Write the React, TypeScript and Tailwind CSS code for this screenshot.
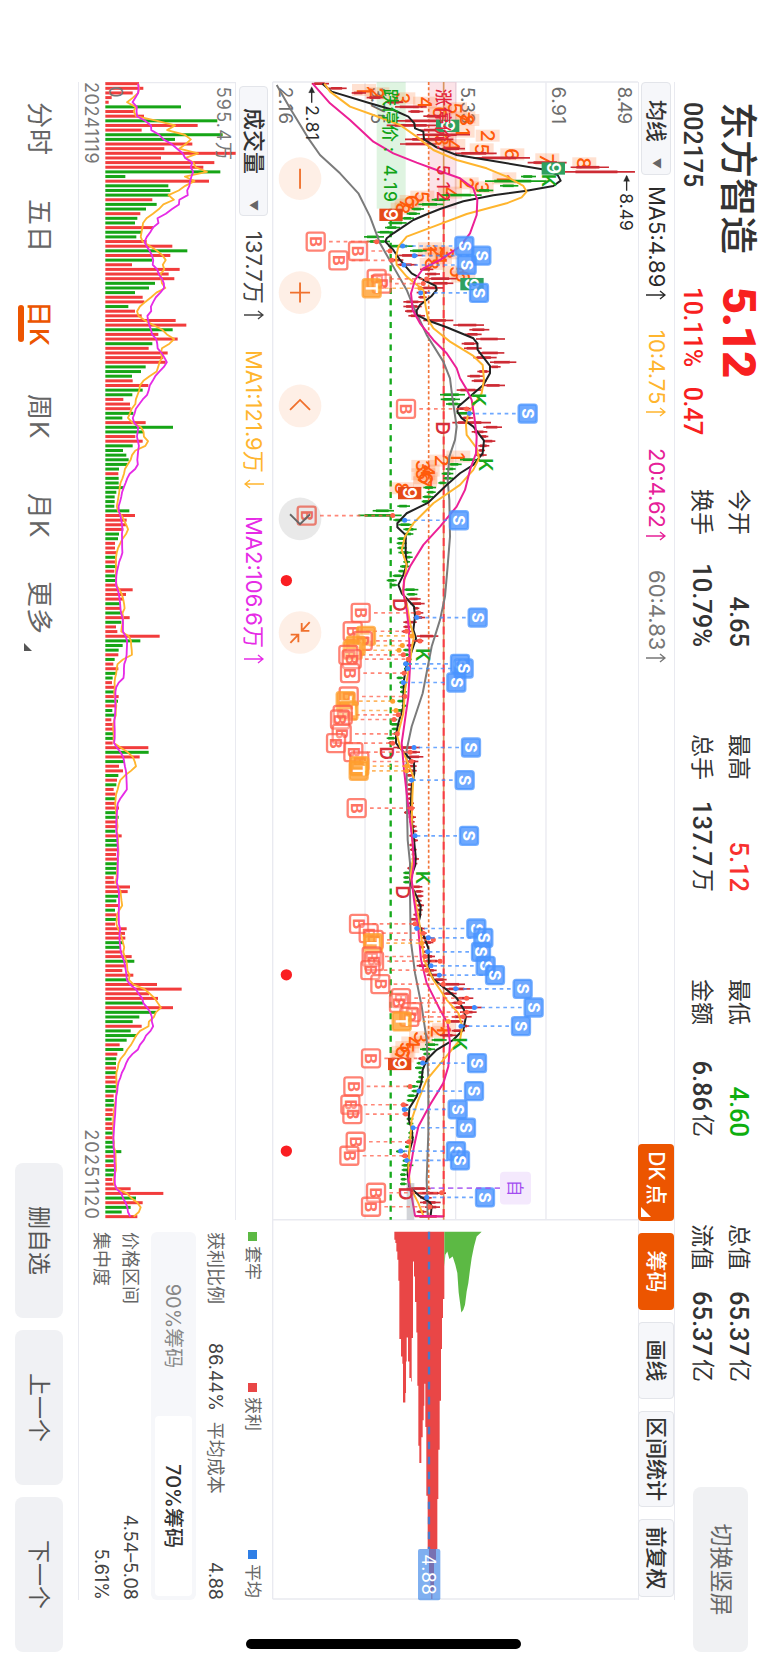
import type { ReactNode } from "react";

const UP = "#f23c3c";
const DOWN = "#16a516";

// Chart units: three per pixel. x runs along time, value grows upwards.
const TOP = 1134;
const STEP = 13.93;
const barX = (i: number) => 71 + i * STEP;
const yOf = (v: number) => TOP - v;

const stats = [
  [
    { label: "今开", value: "4.65", color: "text-[#333]" },
    { label: "换手", value: "10.79%", color: "text-[#333]" },
  ],
  [
    { label: "最高", value: "5.12", color: "text-[#f8302f]" },
    { label: "总手", value: "137.7", unit: "万", color: "text-[#333]" },
  ],
  [
    { label: "最低", value: "4.60", color: "text-[#0fae0f]" },
    { label: "金额", value: "6.86", unit: "亿", color: "text-[#333]" },
  ],
  [
    { label: "总值", value: "65.37", unit: "亿", color: "text-[#333]" },
    { label: "流值", value: "65.37", unit: "亿", color: "text-[#333]" },
  ],
];

const periods = [
  { label: "分时", width: "w-[97px]" },
  { label: "五日", width: "w-[102px]" },
  { label: "日K", width: "w-[93px]", active: true },
  { label: "周K", width: "w-[99px]" },
  { label: "月K", width: "w-[88px]" },
];

// Volume per day, negative on falling days
const volumes = [
  101, 114, 82, 19, 10, -227, 89, 116, -336, 277, 109, -352, -209, 261, 177, 391,
  167, 327, 294, -345, -60, 311, -189, -195, -192, 141, -154, -122, 105, -96, -89,
  144, -109, -93, 124, 201, -246, 195, -140, 80, 223, 190, 207, -149, -131, -89,
  112, 117, -69, 89, 109, 211, 243, -202, 159, 217, -141, 130, 187, 174, 181, -121,
  -107, -80, 82, 129, -112, -81, 54, 74, 76, -84, -51, 121, -203, -114, 90, 112,
  -82, -53, -63, -70, -67, -41, 39, -40, -40, -56, -33, -28, -28, -27, -72, 89, 64,
  62, 54, -41, -38, 29, 29, 34, -30, 34, -34, 27, -34, -34, 36, 82, 62, 54, -47, 44,
  -50, 73, -48, 32, 36, 163, -105, -52, -40, 39, -28, 24, 39, -33, -22, 20, 29, -28,
  40, -38, 29, -21, -29, 18, 22, 27, -29, -27, 22, 129, -130, 103, -57, 41, 53, -39,
  35, -33, 25, 30, -31, 29, 41, -32, -40, 34, 36, -30, 49, -39, -39, 39, 32, 39,
  -35, -34, -34, 25, 28, 74, 67, -41, -33, 38, -29, 34, -36, 29, 64, 59, 60, -53,
  -47, 51, 79, -87, 63, 51, 84, -69, 155, 229, 131, 158, -114, 203, -152, -102, -82,
  109, -76, -93, -64, 43, -54, 36, -33, -32, 32, -33, 34, 36, -35, -32, 25, -25,
  -27, 22, 26, -19, 24, 25, -26, 24, -27, -26, -48, 29, -25, 31, -26, -26, 21, 27,
  76, 174, -92, 112, -76, -49, 96,
];

// [low, high, 1 = rising / 0 = falling]
const candles: number[][] = [
  [155, 207, 1], [205, 260, 1], [275, 318, 1], [320, 375, 1], [375, 430, 1],
  [405, 500, 1], [445, 490, 1], [490, 560, 1], [410, 580, 1], [380, 540, 1],
  [480, 560, 1], [470, 630, 1], [435, 580, 1], [420, 530, 1], [545, 615, 1],
  [585, 710, 1], [640, 810, 1], [803, 920, 1], [932, 1047, 1], [915, 1125, 1],
  [783, 828, 0], [675, 860, 0], [720, 775, 0], [650, 700, 0], [540, 665, 0],
  [515, 570, 0], [475, 550, 0], [455, 492, 0], [440, 480, 0], [425, 462, 0],
  [385, 440, 0], [375, 420, 0], [352, 400, 0], [312, 372, 0], [320, 390, 0],
  [385, 460, 0], [450, 500, 0], [415, 490, 1], [388, 430, 1], [410, 470, 1],
  [480, 520, 1], [495, 540, 1], [500, 590, 1], [510, 580, 1], [480, 550, 1],
  [470, 510, 1], [475, 500, 1], [430, 490, 1], [430, 485, 1], [435, 465, 1],
  [445, 495, 1], [490, 580, 1], [580, 672, 1], [628, 688, 1], [615, 665, 1],
  [648, 735, 1], [605, 655, 1], [612, 665, 1], [655, 733, 1], [640, 710, 1],
  [690, 769, 1], [690, 722, 1], [652, 692, 1], [622, 672, 1], [635, 680, 1],
  [670, 735, 1], [590, 665, 1], [540, 615, 0], [542, 600, 0], [558, 605, 0],
  [590, 640, 1], [590, 640, 0], [605, 640, 1], [577, 693, 1], [670, 726, 1],
  [635, 682, 1], [660, 685, 1], [670, 706, 1], [655, 688, 1], [655, 675, 1],
  [645, 680, 1], [600, 660, 0], [565, 605, 0], [557, 587, 0], [545, 580, 0],
  [550, 580, 0], [535, 560, 0], [490, 528, 0], [500, 527, 0], [488, 520, 0],
  [485, 510, 0], [412, 450, 0], [338, 402, 0], [295, 425, 0], [400, 440, 0],
  [415, 460, 0], [430, 470, 0], [432, 460, 0], [412, 440, 0], [410, 440, 0],
  [412, 440, 0], [415, 455, 0], [430, 458, 0], [430, 450, 0], [420, 450, 0],
  [415, 435, 0], [398, 430, 0], [380, 410, 0], [390, 412, 0], [430, 475, 0],
  [440, 472, 0], [445, 482, 1], [450, 494, 1], [460, 478, 1], [460, 490, 1],
  [460, 495, 1], [430, 470, 1], [430, 455, 1], [425, 455, 1], [470, 535, 1],
  [465, 490, 1], [440, 460, 1], [430, 455, 0], [425, 450, 0], [440, 455, 0],
  [430, 455, 0], [432, 450, 0], [425, 440, 1], [410, 430, 0], [418, 438, 0],
  [420, 435, 0], [420, 440, 0], [425, 440, 1], [412, 432, 0], [425, 440, 0],
  [410, 430, 0], [408, 425, 1], [395, 412, 0], [390, 420, 0], [395, 415, 0],
  [400, 415, 0], [380, 410, 0], [385, 405, 1], [400, 480, 1], [440, 480, 1],
  [440, 490, 1], [440, 475, 1], [430, 470, 1], [432, 470, 1], [440, 460, 1],
  [445, 465, 0], [442, 460, 1], [442, 458, 1], [440, 456, 1], [444, 458, 1],
  [446, 462, 1], [444, 464, 1], [432, 452, 1], [446, 468, 1], [448, 464, 1],
  [450, 470, 1], [452, 472, 1], [448, 470, 1], [455, 474, 1], [448, 465, 1],
  [450, 470, 1], [455, 468, 1], [455, 477, 1], [455, 472, 1], [442, 460, 1],
  [430, 455, 0], [430, 450, 0], [430, 455, 0], [455, 487, 1], [465, 490, 1],
  [470, 490, 1], [468, 485, 1], [470, 492, 1], [465, 488, 1], [460, 485, 1],
  [450, 475, 1], [455, 480, 1], [465, 495, 1], [480, 500, 1], [485, 515, 1],
  [490, 520, 1], [480, 495, 1], [490, 510, 1], [490, 525, 1], [490, 545, 1],
  [470, 515, 1], [495, 530, 1], [500, 545, 1], [520, 560, 1], [545, 615, 1],
  [555, 632, 1], [550, 590, 1], [590, 640, 1], [575, 615, 1], [575, 665, 1],
  [600, 650, 1], [575, 635, 1], [565, 610, 1], [600, 628, 1], [575, 615, 1],
  [540, 590, 1], [515, 560, 0], [495, 535, 0], [480, 525, 0], [490, 510, 0],
  [475, 495, 1], [470, 495, 0], [465, 490, 0], [475, 490, 0], [475, 492, 0],
  [468, 490, 0], [440, 475, 0], [455, 480, 0], [442, 468, 0], [440, 465, 0],
  [425, 445, 1], [430, 445, 0], [430, 450, 1], [440, 460, 0], [440, 460, 0],
  [450, 465, 0], [445, 460, 0], [445, 462, 0], [435, 460, 1], [435, 450, 0],
  [408, 435, 0], [425, 445, 1], [428, 445, 0], [425, 460, 0], [425, 450, 0],
  [420, 440, 0], [422, 440, 0], [420, 440, 0], [440, 512, 1], [465, 558, 1],
  [480, 515, 1], [480, 542, 1], [495, 540, 1], [470, 500, 1], [465, 552, 1],
];

// Moving averages as [value, x] pairs
const ma5 =
  "187,71 215,95 330,130 400,150 445,170 463,190 465,205 490,215 492,238 530,262 590,285 700,303 860,330 893,345 902,362 880,378 800,392 700,406 610,424 540,447 495,465 460,480 430,500 400,520 380,535 376,545 400,570 420,600 455,640 500,665 527,678 530,690 515,708 480,735 470,752 470,765 500,780 560,802 640,835 652,850 653,870 690,918 690,940 670,975 630,1010 595,1040 592,1055 605,1075 640,1100 672,1142 668,1180 640,1215 600,1240 560,1275 505,1328 440,1360 412,1390 412,1402 437,1425 437,1480 440,1515 430,1545 415,1575 425,1600 462,1640 465,1670 460,1710 468,1735 455,1775 440,1810 432,1860 430,1910 430,1940 415,1990 408,2025 408,2050 425,2070 462,2110 463,2140 455,2180 452,2240 455,2280 462,2340 467,2390 466,2415 452,2455 455,2480 470,2510 482,2540 480,2570 475,2590 490,2625 505,2665 507,2730 520,2758 560,2790 590,2815 612,2850 617,2875 610,2910 580,2940 530,2970 500,3000 488,3030 484,3070 470,3110 448,3145 446,3180 455,3205 458,3240 447,3280 443,3340 447,3380 480,3410 510,3428 515,3440 512,3468";
const ma10 =
  "193,71 210,95 270,140 340,165 420,195 470,230 520,270 590,300 680,325 740,350 790,378 800,395 785,412 740,430 620,462 520,500 440,530 415,560 408,590 410,615 440,650 490,690 497,740 505,780 520,805 570,845 640,888 668,915 672,960 665,1000 645,1030 625,1060 618,1095 620,1125 650,1165 657,1195 640,1230 600,1275 520,1330 460,1390 435,1430 425,1470 440,1515 435,1550 428,1595 440,1630 450,1690 462,1730 455,1765 450,1810 435,1890 430,1960 412,2030 420,2060 440,2100 460,2150 457,2210 455,2300 460,2390 452,2450 465,2520 475,2570 485,2640 492,2700 520,2760 560,2820 595,2860 607,2900 600,2940 550,3000 500,3060 475,3120 455,3180 450,3250 445,3320 450,3380 475,3430 490,3468";
const ma20 =
  "158,71 210,130 270,180 340,245 400,280 470,308 530,330 600,355 640,385 652,420 650,465 630,520 600,560 540,600 490,625 465,660 453,700 458,750 480,790 520,840 560,880 590,925 600,955 618,985 635,1020 643,1070 650,1130 648,1180 630,1230 615,1290 590,1340 540,1400 490,1455 450,1520 432,1560 430,1600 440,1650 447,1710 448,1760 450,1820 445,1910 435,1980 425,2050 432,2130 440,2200 450,2280 458,2350 462,2410 455,2460 462,2520 475,2610 483,2700 500,2770 540,2850 563,2890 570,2950 565,3020 550,3070 510,3135 475,3200 462,3260 452,3320 445,3360 455,3410 465,3468 550,3470";
const ma60 =
  "50,75 90,145 145,235 180,285 240,340 295,400 330,470 360,550 400,620 440,690 458,735 500,825 550,905 570,955 578,1020 590,1100 585,1140 568,1190 563,1260 568,1320 570,1430 562,1530 555,1610 540,1680 515,1760 488,1900 455,2000 440,2070 440,2200 443,2340 450,2410 450,2500 452,2640 465,2740 485,2840 500,2940 505,3060 505,3220 500,3360 503,3468";

const parse = (pairs: string) => pairs.split(" ").map((p) => p.split(",").map(Number));

const toLine = (pairs: string) =>
  parse(pairs)
    .map(([v, x]) => `${x},${yOf(v)}`)
    .join(" ");

// Same points, joined with right-angled steps
const toSteps = (pairs: string) =>
  parse(pairs)
    .map(([v, x], i, all) => {
      const before = i > 0 ? all[i - 1][1] : x;
      return `${before},${yOf(v)} ${x},${yOf(v)}`;
    })
    .join(" ");

// [kind, label value, x, dot value]
const marks: [string, number, number, number][] = [
  ["B", 167, 545, 350], ["B", 294, 573, 390], ["B", 235, 601, 395],
  ["B", 350, 657, 500], ["B", 365, 671, 490], ["T", 335, 685, 480],
  ["S", 664, 587, 463], ["S", 613, 558, 428], ["S", 620, 615, 432], ["S", 657, 699, 482],
  ["B", 438, 1047, 620], ["S", 803, 1061, 628], ["B", 140, 1367, 398],
  ["S", 597, 1381, 434], ["B", 302, 1659, 475], ["S", 653, 1673, 470],
  ["B", 278, 1714, 440], ["T", 318, 1728, 455], ["B", 308, 1743, 480],
  ["T", 287, 1757, 427], ["T", 278, 1771, 417], ["B", 265, 1785, 430],
  ["B", 275, 1798, 445], ["B", 270, 1840, 432], ["S", 600, 1812, 437],
  ["S", 611, 1826, 443], ["S", 589, 1868, 430], ["B", 266, 1910, 435],
  ["T", 257, 1924, 398], ["T", 265, 1952, 408], ["B", 248, 1965, 415],
  ["B", 240, 1979, 402], ["B", 245, 2022, 412], ["B", 228, 2050, 398],
  ["B", 280, 2077, 450], ["B", 298, 2105, 455], ["T", 298, 2119, 440],
  ["T", 296, 2133, 440], ["B", 290, 2245, 455], ["S", 633, 2063, 462],
  ["S", 614, 2161, 455], ["S", 627, 2328, 465], ["B", 297, 2592, 465],
  ["B", 326, 2620, 490], ["B", 341, 2640, 520], ["T", 339, 2650, 485],
  ["B", 335, 2690, 495], ["B", 342, 2704, 540], ["B", 331, 2731, 500],
  ["B", 361, 2773, 550], ["B", 423, 2815, 620], ["B", 417, 2829, 600],
  ["B", 454, 2857, 620], ["B", 448, 2871, 610], ["T", 425, 2885, 565],
  ["B", 333, 2996, 490], ["B", 280, 3080, 450], ["B", 271, 3135, 430],
  ["B", 277, 3163, 437], ["B", 287, 3246, 447], ["B", 268, 3288, 435],
  ["B", 348, 3399, 545], ["B", 333, 3441, 510], ["S", 649, 2606, 470],
  ["S", 670, 2634, 505], ["S", 663, 2676, 503], ["S", 677, 2718, 513],
  ["S", 705, 2746, 538], ["S", 788, 2787, 587], ["S", 821, 2843, 643],
  ["S", 783, 2899, 603], ["S", 651, 3010, 488], ["S", 642, 3094, 477],
  ["S", 593, 3149, 433], ["S", 618, 3204, 459], ["S", 588, 3274, 422],
  ["S", 600, 3302, 440], ["S", 675, 3413, 500],
];

// Nine-turn counts: [text, value, x]
const turns: [string, number, number][] = [
  ["1", 312, 90], ["2", 352, 100], ["3", 430, 115], ["4", 495, 128], ["5", 585, 145],
  ["6", 540, 158], ["7", 610, 172], ["8", 622, 180], ["1", 608, 215], ["2", 683, 227],
  ["3", 545, 240], ["4", 580, 255], ["5", 665, 268], ["6", 757, 283], ["7", 862, 298],
  ["8", 973, 310], ["1", 733, 355], ["2", 620, 370], ["3", 665, 382], ["4", 570, 398],
  ["5", 487, 410], ["6", 455, 423], ["7", 440, 434], ["8", 428, 446], ["1", 510, 565],
  ["2", 530, 575], ["3", 560, 580], ["4", 540, 595], ["8", 515, 612], ["5", 590, 635],
  ["6", 610, 650], ["1", 595, 1190], ["2", 545, 1202], ["3", 490, 1218], ["4", 503, 1232],
  ["5", 490, 1243], ["6", 497, 1255], ["7", 495, 1267], ["8", 425, 1285],
  ["1", 552, 2908], ["2", 535, 2916], ["3", 483, 2932], ["4", 460, 2948],
  ["5", 442, 2962], ["6", 430, 2976], ["7", 425, 2990],
];

const nines: [number, number, string][] = [
  [563, 197, "#2fa05f"],
  [880, 325, "#2fa05f"],
  [636, 672, "#2fa05f"],
  [393, 464, "#e64a19"],
  [449, 1299, "#e64a19"],
  [419, 3012, "#e64a19"],
];

const letters: [string, number, number][] = [
  ["K", 865, 362], ["K", 655, 1020], ["K", 677, 1215], ["K", 487, 1785],
  ["K", 487, 2453], ["K", 598, 2953], ["D", 549, 1105], ["D", 419, 1635],
  ["D", 381, 2080], ["D", 427, 2497], ["D", 436, 3402],
];

const axis: [string, number][] = [
  ["8.49", 1073], ["6.91", 877], ["5.33", 604], ["3.75", 332], ["2.16", 58],
];

const profitChips =
  "400,3516 403,3540 406,3550 409,3575 412,3600 415,3663 418,3838 423,3890 427,3912 429,4028 434,4028 436,4000 438,3905 440,3833 444,3905 448,3955 453,3965 455,3835 459,3605 462,3650 465,3727 469,3818 472,3978 475,4158 478,4210 483,4210 484,4133 488,4082 491,4038 493,3972 496,4102 499,4308 503,4468 507,4540 511,4600 514,4618 517,4590 522,4500 528,4468 532,4318 535,4170 539,4023 543,3868 546,3775 549,3718 553,3662 553,3516";
const trappedChips =
  "553,3516 553,3620 556,3585 562,3575 568,3598 578,3590 586,3615 592,3640 596,3698 600,3728 604,3758 610,3750 615,3735 620,3695 625,3670 630,3630 635,3595 642,3560 650,3530 665,3516";

function TrendArrow({ down = false }: { down?: boolean }) {
  return (
    <svg
      viewBox="0 0 10 20"
      className={down ? "h-5 w-2.5 rotate-180" : "h-5 w-2.5"}
      fill="none"
      stroke="currentColor"
      strokeWidth="1.4"
    >
      <path d="M5 20V1M1 6l4-5 4 5" />
    </svg>
  );
}

function Mark({ kind, v, x }: { kind: string; v: number; x: number }) {
  const y = yOf(v);
  const color = kind === "S" ? "#4a94ff" : kind === "T" ? "#ff9f2e" : "#ff5a47";
  return (
    <g>
      <rect
        x={x - 27}
        y={y - 27}
        width="54"
        height="54"
        rx="7"
        fill={kind === "B" ? "#fff" : color}
        fillOpacity={kind === "B" ? 0.25 : 0.8}
        stroke={color}
        strokeOpacity="0.75"
        strokeWidth="7"
      />
      <text
        x={x}
        y={y + 17}
        textAnchor="middle"
        className="text-[48px] font-bold"
        fill={kind === "B" ? color : "#fff"}
        fillOpacity={kind === "B" ? 0.85 : 1}
      >
        {kind}
      </text>
    </g>
  );
}

function RoundButton({ x, gray = false, children }: { x: number; gray?: boolean; children: ReactNode }) {
  return (
    <g
      transform={`translate(${x} ${yOf(120)})`}
      fill="none"
      stroke={gray ? "#666" : "#f0702c"}
      strokeWidth="5.5"
    >
      <circle r="64" fill={gray ? "#555" : "#f97830"} fillOpacity={gray ? 0.13 : 0.12} stroke="none" />
      {children}
    </g>
  );
}

function PriceChart() {
  return (
    <svg viewBox="66 0 4552 1098" className="block h-[366px] w-[1517px] overflow-visible">
      {/* Grid */}
      <g stroke="#e9eaf0" strokeWidth="4">
        {[315, 587, 858].map((v) => (
          <path key={v} d={`M66 ${yOf(v)}H3480`} />
        ))}
        <path d={`M66 ${yOf(38)}H4618M66 0V${yOf(38)}M3480 0V${yOf(38)}M4618 0V${yOf(38)}`} />
      </g>

      {/* Limit prices */}
      <rect x="66" y={yOf(590)} width="380" height="84" fill="#e5294a" fillOpacity="0.13" />
      <rect x="66" y={yOf(437)} width="380" height="87" fill="#1fae2a" fillOpacity="0.14" />
      <path d={`M66 ${yOf(551)}H3480`} stroke="#d8955f" strokeWidth="5" />
      <path d={`M446 ${yOf(551)}H3480`} stroke="#fb3b46" strokeWidth="6" strokeDasharray="24 14" />
      <path d={`M66 ${yOf(506)}H3480`} stroke="#f2763a" strokeWidth="5" strokeDasharray="9 7" />
      <path d={`M446 ${yOf(392)}H3480`} stroke="#16a91c" strokeWidth="7" strokeDasharray="18 16" />

      <g className="text-[56px]" fill="#6d6d6d">
        {axis.map(([text, v]) => (
          <text key={text} x="80" y={yOf(v)} textLength="112">
            {text}
          </text>
        ))}
      </g>

      {/* Nine-turn counts */}
      <g className="text-[58px] font-medium" textAnchor="middle" fill="#ff5a0a">
        {turns.map(([text, v, x], i) => (
          <g key={i}>
            <rect x={x - 18} y={yOf(v) - 36} width="36" height="72" fill="#ff6b1a" fillOpacity="0.2" />
            <text x={x} y={yOf(v) + 21}>
              {text}
            </text>
          </g>
        ))}
      </g>

      {/* Candles */}
      {candles.map(([low, high, up], i) => {
        const span = high - low;
        return (
          <g key={i} stroke={up ? "#cd2b34" : "#16a01a"}>
            <path d={`M${barX(i)} ${yOf(low)}V${yOf(high)}`} strokeWidth="5" />
            <path
              d={`M${barX(i)} ${yOf(low + span * 0.15)}V${yOf(low + span * 0.75)}`}
              strokeWidth="8"
            />
          </g>
        );
      })}

      {/* Averages */}
      <g fill="none" strokeWidth="6" strokeLinejoin="round">
        <polyline points={toLine(ma60)} stroke="#7b7b7b" />
        <polyline points={toLine(ma5)} stroke="#222" />
        <polyline points={toLine(ma10)} stroke="#ffb52e" />
        <polyline points={toLine(ma20)} stroke="#ec2096" />
      </g>
      <rect x="3370" y={yOf(463)} width="110" height="23" fill="#7d8590" fillOpacity="0.35" />

      {nines.map(([v, x, fill], i) => (
        <g key={i}>
          <rect x={x - 18} y={yOf(v) - 35} width="37" height="70" fill={fill} />
          <text x={x} y={yOf(v) + 20} textAnchor="middle" fill="#fff" className="text-[56px] font-semibold">
            9
          </text>
        </g>
      ))}

      <g className="text-[56px] font-semibold" textAnchor="middle">
        {letters.map(([text, v, x], i) => (
          <text key={i} x={x} y={yOf(v) + 20} fill={text === "K" ? "#17a81b" : "#d62f3b"}>
            {text}
          </text>
        ))}
      </g>

      <g className="text-[52px] font-medium">
        <text x="86" y={yOf(532)} fill="#e5243c" textLength="160">涨停价</text>
        <text x="254" y={yOf(532)} fill="#e5243c">:</text>
        <text x="314" y={yOf(532)} fill="#e5243c" textLength="110">5.12</text>
        <text x="86" y={yOf(372)} fill="#12a318" textLength="160">跌停价</text>
        <text x="260" y={yOf(372)} fill="#12a318">:</text>
        <text x="314" y={yOf(372)} fill="#12a318" textLength="112">4.19</text>
      </g>

      {/* Extremes */}
      <g className="text-[52px]" fill="#2b2b2b">
        <text x="136" y={yOf(137)} textLength="104">2.81</text>
        <text x="400" y={yOf(1081)} textLength="112">8.49</text>
      </g>
      <g stroke="#2b2b2b" strokeWidth="4">
        <path d={`M84 ${yOf(155)}H128M348 ${yOf(1100)}H392`} />
        <path
          d={`M80 ${yOf(155)}l18 -9v18zM346 ${yOf(1100)}l18 -9v18z`}
          fill="#2b2b2b"
          strokeWidth="1"
        />
      </g>

      {/* Trade marks */}
      {marks.map(([kind, v, x, dot], i) => {
        const color = kind === "S" ? "#3d8bff" : kind === "T" ? "#ff9f2e" : "#ff5f4b";
        const start = kind === "S" ? v - 36 : v + 40;
        return (
          <g key={i}>
            <path
              d={`M${x} ${yOf(start)}V${yOf(dot)}`}
              stroke={color}
              strokeOpacity="0.75"
              strokeWidth="5"
              strokeDasharray="11 11"
            />
            <circle cx={x} cy={yOf(dot)} r="7.5" fill={color} />
          </g>
        );
      })}
      {marks.map(([kind, v, x], i) => (
        <Mark key={i} kind={kind} v={v} x={x} />
      ))}

      <path
        d={`M3385 ${yOf(720)}V${yOf(512)}`}
        stroke="#a24df0"
        strokeOpacity="0.8"
        strokeWidth="5"
        strokeDasharray="16 12"
      />
      <rect x="3336" y={yOf(813)} width="98" height="93" rx="12" fill="#f4e9fd" />
      <text x="3385" y={yOf(748)} textAnchor="middle" fill="#a34df0" className="text-[50px]">
        自
      </text>

      {[1562, 2745, 3274].map((x) => (
        <circle key={x} cx={x} cy={yOf(79)} r="17" fill="#fa1e22" />
      ))}

      <RoundButton x={356}>
        <path d="M-30 0H30" />
      </RoundButton>
      <RoundButton x={698}>
        <path d="M-30 0H30M0 -30V30" />
      </RoundButton>
      <RoundButton x={1038}>
        <path d="M12 -30L-18 0L12 30" />
      </RoundButton>
      <RoundButton x={1377} gray>
        <path d="M-14 -30L16 0L-14 30" />
      </RoundButton>
      <RoundButton x={1718}>
        <path d="M-31 -29L-5 -5M-5 -28V-5H-29M31 29L6 5M29 5H6V28" />
      </RoundButton>

      {/* Chip distribution */}
      <polygon points={toSteps(profitChips)} fill="#e94646" />
      <polygon points={toLine(trappedChips)} fill="#5cb944" />
      <path
        d={`M3516 ${yOf(507)}H4468`}
        stroke="#4b78c8"
        strokeWidth="7"
        strokeDasharray="23 22"
      />
      <rect x="4468" y={yOf(541)} width="154" height="67" rx="6" fill="#3c86e8" fillOpacity="0.66" />
      <text x="4545" y={yOf(487)} textAnchor="middle" fill="#fff" className="text-[54px]" textLength="122">
        4.88
      </text>
    </svg>
  );
}

const average = (size: number) =>
  volumes
    .map((_, i) => {
      let sum = 0;
      for (let k = i - size + 1; k <= i; k++) sum += k < 0 ? 98 : Math.abs(volumes[k]);
      return `${barX(i)},${392 - sum / size}`;
    })
    .join(" ");

function VolumeChart() {
  return (
    <svg viewBox="66 0 3414 393" className="block h-[131px] w-[1138px]">
      <path d="M66 1H3480" stroke="#e9eaf0" strokeWidth="4" />
      <path d="M68 0V393" stroke="#e9eaf0" strokeWidth="4" />
      {volumes.map((v, i) => (
        <rect
          key={i}
          x={barX(i) - 4.5}
          y={392 - Math.abs(v)}
          width="9"
          height={Math.abs(v)}
          fill={v > 0 ? UP : DOWN}
        />
      ))}
      <g className="text-[54px]" fill="#777">
        <text x="80" y="56" textLength="220">595.4万</text>
        <text x="79" y="380">0</text>
      </g>
      <g fill="none" strokeWidth="5.5" strokeLinejoin="round">
        <polyline points={average(5)} stroke="#ffb52e" />
        <polyline points={average(10)} stroke="#e62be6" />
      </g>
    </svg>
  );
}

function Header() {
  return (
    <header className="flex h-[93px] pl-[102px] pr-[13px] text-[#333]">
      <div className="w-[185px]">
        <h1 className="mt-[8px] text-[38px] font-medium leading-[42px]">东方智造</h1>
        <p className="mt-[11px] font-['Roboto'] text-[25px] font-medium leading-[30px]">002175</p>
      </div>
      <div className="w-[202px] font-['Roboto'] text-[#f82020]">
        <p className="mt-[8px] text-[47px] font-black leading-[42px] tracking-[-1.5px]">5.12</p>
        <p className="mt-[11px] flex gap-[20px] text-[25px] font-medium leading-[30px] tracking-[-0.4px]">
          <span>10.11%</span>
          <span>0.47</span>
        </p>
      </div>
      <div className="flex gap-[87px]">
        {stats.map((column) => (
          <dl key={column[0].label} className="flex w-[158px] flex-col gap-[7px] pt-[14px]">
            {column.map((row) => (
              <div key={row.label} className="flex h-[30px] items-center justify-between">
                <dt className="text-[23px]">{row.label}</dt>
                <dd
                  className={`flex items-center font-['Roboto','Noto_Sans_CJK_SC'] text-[25.5px] font-medium ${row.color}`}
                >
                  {row.value}
                  {row.unit && <span className="ml-[3px] text-[23px] font-normal">{row.unit}</span>}
                </dd>
              </div>
            ))}
          </dl>
        ))}
      </div>
      <button className="ml-auto mt-[20px] h-[55px] w-[165px] rounded-lg bg-[#f0f1f3] text-[23px] text-[#666]">
        切换竖屏
      </button>
    </header>
  );
}

function Toolbar() {
  return (
    <div className="ml-[82px] flex h-[37px] w-[1518px] items-center border-y border-[#e9eaf0] text-[22px]">
      <button className="flex h-[30px] w-[93px] items-center justify-between rounded-sm border border-[#e3e5ea] bg-[#f6f7fa] pl-[17px] pr-[5px] text-[21px] font-medium text-[#333]">
        均线
        <span className="text-[11px] text-[#666]">▼</span>
      </button>
      <div className="flex items-center">
        <span className="ml-[11px] flex w-[144px] items-center gap-[3px] text-[#2b2b2b]">
          MA5:4.89 <TrendArrow />
        </span>
        <span className="flex w-[118px] items-center gap-[3px] text-[#ffb52e]">
          10:4.75 <TrendArrow />
        </span>
        <span className="flex w-[122px] items-center gap-[3px] text-[#e62098]">
          20:4.62 <TrendArrow />
        </span>
        <span className="flex items-center gap-[3px] text-[#777]">
          60:4.83 <TrendArrow />
        </span>
      </div>
      <div className="ml-auto mr-[3px] flex gap-[12px] text-[21px] font-medium">
        <button className="relative h-[36px] w-[77px] rounded-sm bg-[#ec5500] pr-[9px] text-white">
          DK<span className="ml-[3px]">点</span>
          <svg viewBox="0 0 10 10" className="absolute bottom-[3px] right-[4px] h-2.5 w-2.5">
            <path d="M10 0V10H0z" fill="#fff" />
          </svg>
        </button>
        <button className="h-[36px] w-[77px] rounded-sm bg-[#ec5500] text-white">筹码</button>
        <button className="h-[36px] w-[77px] rounded-sm border border-[#e3e5ea] bg-[#f6f7fa] text-[#333]">
          画线
        </button>
        <button className="h-[36px] w-[96px] rounded-sm border border-[#e3e5ea] bg-[#f6f7fa] text-[#333]">
          区间统计
        </button>
        <button className="h-[36px] w-[78px] rounded-sm border border-[#e3e5ea] bg-[#f6f7fa] text-[#333]">
          前复权
        </button>
      </div>
    </div>
  );
}

function VolumePanel() {
  return (
    <section className="w-[1138px]">
      <div className="flex h-[36px] items-center text-[22px]">
        <button className="ml-[4px] flex h-[29px] w-[130px] items-center justify-between rounded-sm border border-[#e3e5ea] bg-[#f6f7fa] pl-[21px] pr-[4px] font-medium text-[#333]">
          成交量
          <span className="text-[11px] text-[#666]">▼</span>
        </button>
        <span className="ml-[15px] flex w-[119px] items-center gap-[6px] text-[#444]">
          137.7万 <TrendArrow />
        </span>
        <span className="flex w-[166px] items-center gap-[6px] text-[#ffb52e]">
          MA1:121.9万 <TrendArrow down />
        </span>
        <span className="flex items-center gap-[6px] text-[#e62be6]">
          MA2:106.6万 <TrendArrow />
        </span>
      </div>
      <VolumeChart />
      <div className="flex h-[27px] items-center justify-between text-[18px] text-[#777]">
        <span className="tracking-[0.6px]">20241119</span>
        <span className="tracking-[1.2px]">20251120</span>
      </div>
    </section>
  );
}

function ChipPanel() {
  return (
    <section className="ml-[12px] flex w-[368px] flex-col text-[18px] text-[#666]">
      <div className="flex h-[39px] items-center text-[17px]">
        <span className="flex w-[151px] items-center gap-[5px]">
          <i className="h-[9px] w-[9px] bg-[#5cb944]" />
          套牢
        </span>
        <span className="flex w-[167px] items-center gap-[5px]">
          <i className="h-[9px] w-[9px] bg-[#e94646]" />
          获利
        </span>
        <span className="flex items-center gap-[5px]">
          <i className="h-[9px] w-[9px] bg-[#2f7fe6]" />
          平均
        </span>
      </div>
      <div className="flex h-[34px] items-center">
        <span>获利比例</span>
        <span className="ml-[39px] text-[#444]">86.44%</span>
        <span className="ml-[11px]">平均成本</span>
        <span className="ml-auto text-[#444]">4.88</span>
      </div>
      <div className="mt-[3px] flex h-[45px] rounded-md bg-[#f6f7fa] p-[4px] text-[20px]">
        <button className="flex-1 text-[#888]">90%筹码</button>
        <button className="flex-1 rounded bg-white font-medium text-[#333]">70%筹码</button>
      </div>
      <div className="mt-[6px] flex h-[29px] items-center justify-between">
        <span>价格区间</span>
        <span className="text-[#444]">4.54–5.08</span>
      </div>
      <div className="flex h-[29px] items-center justify-between">
        <span>集中度</span>
        <span className="text-[#444]">5.61%</span>
      </div>
    </section>
  );
}

function Footer() {
  return (
    <footer className="flex h-[78px] items-center pl-[102px] pr-[13px]">
      <nav className="flex text-[26px] leading-[40px] tracking-[1px] text-[#666]">
        {periods.map((p) => (
          <div key={p.label} className={p.width}>
            {p.active ? (
              <span className="relative font-medium text-[#ec5500]">
                {p.label}
                <i className="absolute bottom-[-6px] left-[4px] h-[6px] w-[37px] rounded-full bg-[#ec5500]" />
              </span>
            ) : (
              p.label
            )}
          </div>
        ))}
        <div className="flex items-end">
          更多
          <svg viewBox="0 0 8 8" className="mb-[5px] ml-[8px] h-2 w-2">
            <path d="M8 0V8H0z" fill="#555" />
          </svg>
        </div>
      </nav>
      <div className="ml-auto flex gap-[12px] text-[23px] text-[#555]">
        <button className="h-[48px] w-[155px] rounded-lg bg-[#f0f1f4]">删自选</button>
        <button className="h-[48px] w-[155px] rounded-lg bg-[#f0f1f4]">上一个</button>
        <button className="h-[48px] w-[155px] rounded-lg bg-[#f0f1f4]">下一个</button>
      </div>
    </footer>
  );
}

export default function App() {
  return (
    <div className="h-[1665px] w-[768px] overflow-hidden bg-white">
      {/* Landscape screen turned on its side */}
      <main className="relative h-[768px] w-[1665px] origin-top-left translate-x-[768px] rotate-90 bg-white font-['Inter','Noto_Sans_CJK_SC',sans-serif]">
        <Header />
        <Toolbar />
        <div className="ml-[82px]">
          <PriceChart />
        </div>
        <div className="ml-[82px] flex h-[194px] w-[1518px] border-b border-[#e9eaf0]">
          <VolumePanel />
          <ChipPanel />
        </div>
        <Footer />
        <div className="absolute right-[16px] top-[247px] h-[275px] w-[10px] rounded-full bg-black" />
      </main>
    </div>
  );
}
